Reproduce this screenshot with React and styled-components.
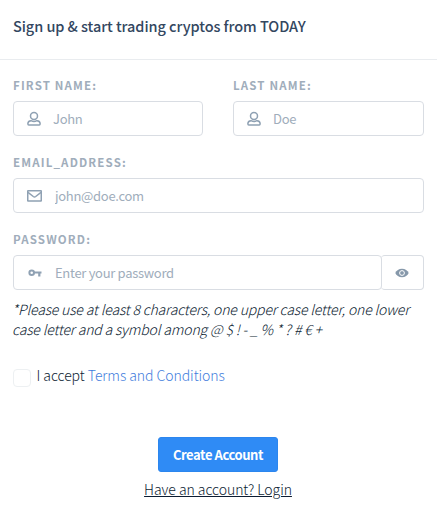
import React from "react";
import styled, { createGlobalStyle } from "styled-components";

function UserIcon() {
  return (
    <Icon width="14" height="16" viewBox="0 0 14 16">
      <circle cx="7" cy="4.900" r="3.500" />
      <path d="M4 9.700C2 9.900.9 11 .9 12.600v.5c0 .6.3.9.9.9h10.400c.6 0 .9-.3.9-.9v-.5c0-1.600-1.100-2.700-3.100-2.900-1.800.9-4.200.9-6 0z" />
    </Icon>
  );
}

function MailIcon() {
  return (
    <Icon width="15" height="12" viewBox="0 0 15 12">
      <rect x=".75" y=".75" width="13.500" height="10.300" rx=".3" />
      <path d="M1 2.300l5.300 4.200c.8.600 1.600.600 2.400 0L14 2.300" />
    </Icon>
  );
}

function KeyIcon() {
  return (
    <Icon width="14" height="8" viewBox="0 0 14 8">
      <circle cx="3.700" cy="3.700" r="2.300" strokeWidth="2" />
      <path d="M6 3.500h7.500M11.300 3.500v4" strokeWidth="2.200" />
    </Icon>
  );
}

function EyeIcon() {
  return (
    <Icon width="14" height="10" viewBox="0 0 14 10">
      <path
        d="M7 .8C3.800.8 1.400 2.500.3 5c1.100 2.500 3.500 4.200 6.700 4.200s5.600-1.700 6.700-4.200C12.600 2.500 10.200.8 7 .8z"
        fill="#8698aa"
        stroke="none"
      />
      <circle cx="7" cy="5" r="2.400" stroke="#fff" strokeWidth="1" fill="#8698aa" />
    </Icon>
  );
}

function App() {
  return (
    <>
      <GlobalStyle />
      <Header>
        <Title>Sign up &amp; start trading cryptos from TODAY</Title>
      </Header>
      <Form onSubmit={(e) => e.preventDefault()}>
        <Names>
          <Field>
            <Label htmlFor="first">First name:</Label>
            <InputBox>
              <IconSlot><UserIcon /></IconSlot>
              <Input id="first" placeholder="John" />
            </InputBox>
          </Field>
          <Field>
            <Label htmlFor="last">Last name:</Label>
            <InputBox>
              <IconSlot><UserIcon /></IconSlot>
              <Input id="last" placeholder="Doe" />
            </InputBox>
          </Field>
        </Names>
        <Field>
          <Label htmlFor="email">Email_address:</Label>
          <InputBox>
            <IconSlot $wide><MailIcon /></IconSlot>
            <Input id="email" placeholder="john@doe.com" />
          </InputBox>
        </Field>
        <Field>
          <Label htmlFor="password">Password:</Label>
          <PasswordRow>
            <InputBox>
              <IconSlot $wide><KeyIcon /></IconSlot>
              <Input id="password" type="password" placeholder="Enter your password" />
            </InputBox>
            <ShowButton type="button" aria-label="Show password"><EyeIcon /></ShowButton>
          </PasswordRow>
        </Field>
        <Hint>
          *Please use at least 8 characters, one upper case letter, one lower
          <br />
          case letter and a symbol among @ $ ! - _ % * ? # € +
        </Hint>
        <Accept>
          <Checkbox type="checkbox" />
          <span>I accept <Terms href="#">Terms and Conditions</Terms></span>
        </Accept>
        <Actions>
          <CreateButton>Create Account</CreateButton>
          <Login href="#">Have an account? Login</Login>
        </Actions>
      </Form>
    </>
  );
}

export default App;

const GlobalStyle = createGlobalStyle`
  * {
    box-sizing: border-box;
  }
  body {
    margin: 0;
    background: #fff;
    color: #0c1c32;
    font-family: "Source Sans Pro", "Noto Sans CJK SC", sans-serif;
    font-size: 14px;
  }
  input, button {
    font-family: inherit;
  }
`;

const Header = styled.header`
  height: 60px;
  padding: 16px 13px 0;
  border-bottom: 1px solid #e9ecef;
`;

const Title = styled.h1`
  margin: 0;
  font-size: 14.500px;
  line-height: 20px;
  font-weight: 500;
  letter-spacing: -0.060px;
  color: #33475f;
  white-space: nowrap;
`;

const Form = styled.form`
  padding: 16px 13px 0;
`;

const Names = styled.div`
  display: grid;
  grid-template-columns: 190px 191px;
  gap: 30px;
`;

const Field = styled.div`
  height: 77px;
`;

const Label = styled.label`
  display: block;
  height: 25px;
  line-height: 18px;
  font-size: 11.500px;
  font-weight: 700;
  letter-spacing: 1.150px;
  text-transform: uppercase;
  color: #a0adbb;
`;

const InputBox = styled.div`
  display: flex;
  flex: 1;
  height: 35px;
  border: 1px solid #d9dde3;
  border-radius: 4px;
  background: #fff;
`;

const IconSlot = styled.span`
  display: flex;
  flex: none;
  align-items: center;
  justify-content: center;
  width: ${({ $wide }) => ($wide ? "41px" : "39px")};
`;

const Icon = styled.svg`
  fill: none;
  stroke: #8fa1b3;
  stroke-width: 1.500;
`;

const Input = styled.input`
  flex: 1;
  min-width: 0;
  padding: 0;
  border: 0;
  outline: 0;
  background: none;
  font-size: 13px;
  letter-spacing: -0.300px;
  &::placeholder {
    color: #a0adbb;
    opacity: 1;
  }
`;

const PasswordRow = styled.div`
  display: flex;
`;

const ShowButton = styled.button`
  display: flex;
  align-items: center;
  justify-content: center;
  width: 43px;
  height: 35px;
  margin-left: -1px;
  padding: 0 1px 0 0;
  border: 1px solid #d9dde3;
  border-left: 0;
  border-radius: 4px;
  background: none;
`;

const Hint = styled.p`
  margin: -8px 0 0 -1px;
  font-size: 14px;
  line-height: 20px;
  font-weight: 300;
  font-style: italic;
  letter-spacing: -0.160px;
  white-space: nowrap;
`;

const Accept = styled.label`
  display: flex;
  height: 20px;
  margin-top: 26px;
  gap: 5.500px;
  line-height: 20px;
  font-weight: 300;
  letter-spacing: -0.060px;
`;

const Checkbox = styled.input`
  appearance: none;
  flex: none;
  width: 18px;
  height: 18px;
  margin: 4px 0 0;
  border: 1px solid #edf0f2;
  border-radius: 4px;
`;

const Terms = styled.a`
  color: #3f7ddd;
  text-decoration: none;
`;

const Actions = styled.div`
  display: flex;
  flex-direction: column;
  align-items: center;
  width: 410px;
  margin-top: 52px;
`;

const CreateButton = styled.button`
  width: 120px;
  height: 35px;
  padding: 0;
  border: 1px solid #2c86ee;
  border-radius: 3px;
  background: #2f8bf5;
  color: #fff;
  font-size: 13px;
  font-weight: 700;
  letter-spacing: -0.420px;
  white-space: nowrap;
`;

const Login = styled.a`
  margin-top: 7px;
  line-height: 20px;
  font-weight: 300;
  letter-spacing: -0.050px;
  color: #0c1c32;
`;
